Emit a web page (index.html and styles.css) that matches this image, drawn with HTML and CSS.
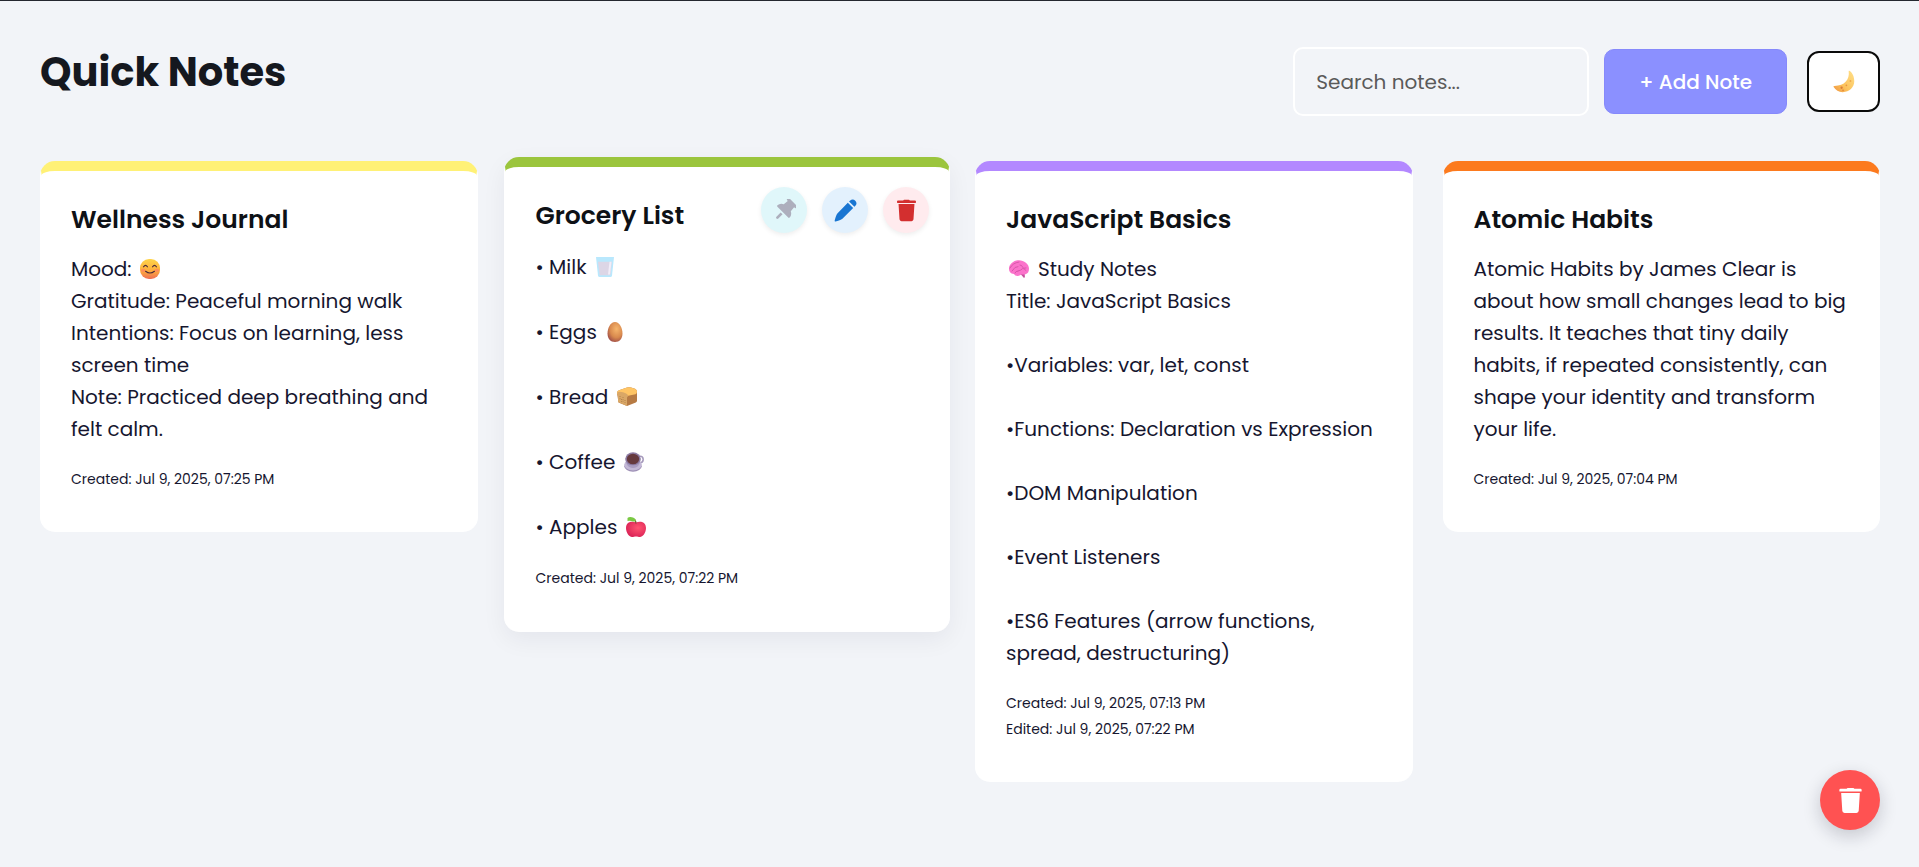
FILE: index.html
```html
<!DOCTYPE html>
<html lang="en">
<head>
<meta charset="utf-8">
<meta name="viewport" content="width=device-width, initial-scale=1">
<title>Quick Notes</title>
<link rel="stylesheet" href="styles.css">
</head>
<body>
<svg class="sprite" aria-hidden="true">
  <defs>
    <symbol id="trash" viewBox="0 0 24 24">
      <path d="M8.6 1.6Q8.8.9 9.6.9h4.8q.8 0 1 .7h5.4q1.100 0 1.100 1.100v.8q0 .6-.6.6H2.700q-.6 0-.6-.6v-.8q0-1.100 1.100-1.100z"/>
      <path d="M3.700 5.300h16.600l-1 15.900q-.1 1.900-2 1.900H6.700q-1.900 0-2-1.900z"/>
    </symbol>
    <linearGradient id="gold" x1="0" y1="0" x2="0" y2="1"><stop offset="0" stop-color="#ffd54a"/><stop offset=".6" stop-color="#fdac3c"/><stop offset="1" stop-color="#ee6e55"/></linearGradient>
    <linearGradient id="moonlit" x1="1" y1="0" x2="0" y2="1"><stop offset="0" stop-color="#ffe08a"/><stop offset=".6" stop-color="#fcc35c"/><stop offset="1" stop-color="#ef9440"/></linearGradient>
    <radialGradient id="shell" cx=".6" cy=".35" r=".7"><stop offset="0" stop-color="#f6b56c"/><stop offset=".6" stop-color="#d98a4e"/><stop offset="1" stop-color="#a04e48"/></radialGradient>
    <radialGradient id="ruby" cx=".6" cy=".4" r=".7"><stop offset="0" stop-color="#ff5470"/><stop offset="1" stop-color="#d81f55"/></radialGradient>
  </defs>
</svg>

<header class="topbar">
  <h1 class="brand">Quick Notes</h1>
  <div class="controls">
    <input class="search" type="search" aria-label="Search notes" placeholder="Search notes...">
    <button class="add" type="button">+ Add Note</button>
    <button class="theme" type="button" aria-label="Toggle dark mode">
      <svg class="moon" viewBox="0 0 24 24"><path d="M17.600.9q-.9-.4-.7.6C18 9.700 12.800 16.400 2 16.600q-1.500 0-.8 1.200c1.900 3.200 5.400 5.300 9.500 5.300 6.800 0 12-5.100 12-11.300 0-4.800-1.800-9-5.100-10.900z" fill="url(#moonlit)"/><circle cx="9.500" cy="18.500" r="1.200" fill="#d97c35"/><circle cx="14.500" cy="16" r=".9" fill="#e89443"/><circle cx="18.700" cy="11.500" r="1" fill="#efaa4e"/><circle cx="11" cy="21.200" r=".8" fill="#d97c35"/></svg>
    </button>
  </div>
</header>

<main class="notes">
  <article class="note yellow">
    <h2 class="title">Wellness Journal</h2>
    <p class="text">Mood: <svg class="emoji" role="img" aria-label="smiling face" viewBox="0 0 20 20"><rect width="20" height="20" rx="9" fill="url(#gold)"/><ellipse cx="3.200" cy="11.300" rx="2.200" ry="1.600" fill="#ff7f66" opacity=".7"/><ellipse cx="16.800" cy="11.300" rx="2.200" ry="1.600" fill="#ff7f66" opacity=".7"/><path d="M3.600 7.800q1.900-3 3.800 0M12.600 7.800q1.900-3 3.800 0M5.600 12.300q4.400 3.400 8.800 0" fill="none" stroke="#4b2a3a" stroke-width="1.200" stroke-linecap="round"/></svg><br>Gratitude: Peaceful morning walk<br>Intentions: Focus on learning, less screen time<br>Note: Practiced deep breathing and felt calm.</p>
    <footer class="dates"><time>Created: Jul 9, 2025, 07:25 PM</time></footer>
  </article>

  <article class="note green raised">
    <h2 class="title">Grocery List</h2>
    <div class="actions">
      <button class="action pin" type="button" aria-label="Pin note"><svg viewBox="0 0 24 24"><g transform="rotate(45 12 12)"><path d="M6.500-.6h11q1.100 0 1.100 1.100v1q0 1-1.100 1h-.8l.5 5.400q3.800 2 3.800 5.500 0 1.100-1 1.100H4q-1 0-1-1.100 0-3.500 3.800-5.500l.5-5.400h-.8q-1.100 0-1.100-1v-1q0-1.100 1.100-1.100z"/><path d="M10.600 16.300h2.800v6.200q0 1.400-1.400 1.400t-1.400-1.400z"/></g></svg></button>
      <button class="action edit" type="button" aria-label="Edit note"><svg viewBox="0 0 24 24"><path d="M16.600 1.900q3-2.700 5.600 0t-.1 5.500l-.8.800-5.600-5.500z"/><path d="M14.400 4l5.600 5.500L8.800 20.700Q7.700 21.800 1.700 23.500q-1.300.3-1-1Q2.200 16.300 3.500 15z"/></svg></button>
      <button class="action delete" type="button" aria-label="Delete note"><svg viewBox="0 0 24 24"><use href="#trash"/></svg></button>
    </div>
    <ul class="list">
      <li>• Milk <svg class="emoji" role="img" aria-label="glass of milk" viewBox="0 0 20 20"><path d="M1 0h18l-2 18.500q-.2 1.500-1.600 1.500H4.600Q3.200 20 3 18.500z" fill="#b9e8fd"/><path d="M3 4.700h14l-1.500 12.600q-.1.900-.9.900H5.400q-.8 0-.9-.9z" fill="#dcd6e6"/><path d="M14.500 4.700h2L15 17.500h-2z" fill="#f1edf8"/></svg></li>
      <li>• Eggs <svg class="emoji" role="img" aria-label="egg" viewBox="0 0 20 20"><path d="M10 0c4.500 0 7.500 6.300 7.500 11.500 0 5.200-3 8.500-7.500 8.500s-7.500-3.300-7.500-8.500C2.500 6.300 5.500 0 10 0z" fill="url(#shell)"/></svg></li>
      <li>• Bread <svg class="emoji" role="img" aria-label="bread" viewBox="0 0 20 20"><path d="M0 6Q0 4 2 3.300L10 .5q2-.6 4 0l4 1.200q2 .8 2 3v9q0 1.200-1.200 1.700L10 19 1.500 15.500z" fill="#b77b44"/><path d="M0 6Q0 4 2 3.300L10 .5q2-.6 4 0l4 1.200q2 .8 2 3 0 1.800-1.500 2.500L10 9 .8 7.500Q0 7 0 6z" fill="#ffc565"/><path d="M.2 5.500Q2 4 6 5.200q4.500 1.200 5 3.300 0 1.500-1 2V19l-8-3.500q-1-.5-1-1.500V8.500Q0 7 .2 5.500z" fill="#d9a766"/><path d="M3 9v4M6 10v5M8 13v3M4.500 12v3" stroke="#a87849" stroke-width=".8" stroke-dasharray="1 1.200"/></svg></li>
      <li>• Coffee <svg class="emoji" role="img" aria-label="coffee" viewBox="0 0 20 20"><circle cx="16" cy="7.500" r="3.200" fill="none" stroke="#a69abc" stroke-width="1.500"/><ellipse cx="9" cy="14.200" rx="8.700" ry="5.500" fill="#9d8fb5"/><ellipse cx="9" cy="12.800" rx="8.700" ry="5.600" fill="#c3b8d6"/><path d="M1.500 6.500h15c0 5.500-2.500 9.500-7.500 9.500S1.500 12 1.500 6.500z" fill="#a99cc1"/><ellipse cx="9" cy="6.800" rx="7.700" ry="6.500" fill="#8d7ba3"/><ellipse cx="9" cy="7" rx="6.200" ry="5.200" fill="#66393e"/></svg></li>
      <li>• Apples <svg class="emoji" role="img" aria-label="apple" viewBox="0 0 20 20"><path d="M10 5.600C13 4 20 4 20 11c0 5-3.500 9-6 9-1.500 0-2.500-.5-4-.5s-2.500.5-4 .5c-2.500 0-6-4-6-9 0-7 7-7 10-5.400z" fill="url(#ruby)"/><path d="M10 6.500Q10 4 8.500 2.500" stroke="#7a3e2c" stroke-width="1.200" fill="none"/><path d="M1.500 1Q3-.4 6 .2q3.500.6 4 3.800Q8 5.200 5.300 4 3.500 3.300 1.500 4z" fill="#7ac943"/></svg></li>
    </ul>
    <footer class="dates"><time>Created: Jul 9, 2025, 07:22 PM</time></footer>
  </article>

  <article class="note purple">
    <h2 class="title">JavaScript Basics</h2>
    <p class="text"><svg class="emoji lead" role="img" aria-label="brain" viewBox="0 0 20 20"><path d="M11.500 15l3.500 4q1.400-1 .7-4z" fill="#c44f9c"/><path d="M10 1.200c5 0 10 3.800 10 8.300 0 3.300-1.200 5.200-3.500 5.800-2 .6-3.500-.3-5 .7-2.500 1.600-5.500 1-6.500-1C1.500 15 0 12.500 0 9.800c0-5 5-8.600 10-8.600z" fill="#fb73cb"/><path d="M1 9Q3.500 4 10 3M3 12q3-5 6-4.500M11 6q2 0 2.500 2T17 9M9 12q3-.5 4-2t4 1.500M6 14q.5-2 3-2" stroke="#d455a6" stroke-width=".9" stroke-linecap="round" fill="none"/></svg>Study Notes<br>Title: JavaScript Basics</p>
    <ul class="list">
      <li>•Variables: var, let, const</li>
      <li>•Functions: Declaration vs Expression</li>
      <li>•DOM Manipulation</li>
      <li>•Event Listeners</li>
      <li>•ES6 Features (arrow functions, spread, destructuring)</li>
    </ul>
    <footer class="dates"><time>Created: Jul 9, 2025, 07:13 PM</time><time>Edited: Jul 9, 2025, 07:22 PM</time></footer>
  </article>

  <article class="note orange">
    <h2 class="title">Atomic Habits</h2>
    <p class="text">Atomic Habits by James Clear is about how small changes lead to big results. It teaches that tiny daily habits, if repeated consistently, can shape your identity and transform your life.</p>
    <footer class="dates"><time>Created: Jul 9, 2025, 07:04 PM</time></footer>
  </article>
</main>

<button class="fab" type="button" aria-label="Trash"><svg viewBox="0 0 24 24"><use href="#trash"/></svg></button>
</body>
</html>
```
FILE: styles.css
```css
* { box-sizing: border-box; }

body {
  margin: 0;
  min-height: 100vh;
  padding: 46px 39px 40px 40px;
  border-top: 1px solid #24272f;
  background: #f2f4f8;
  color: #16162f;
  font-family: Poppins, Inter, "Open Sans", sans-serif;
  font-size: 20px;
  font-weight: 400;
  line-height: 32px;
}

button, input { font: inherit; }
button { cursor: pointer; }
.sprite { position: absolute; width: 0; height: 0; }

.topbar {
  display: flex;
  justify-content: space-between;
  align-items: center;
  margin-bottom: 45px;
}
.brand {
  margin: 0 0 20px;
  color: #15181f;
  font-size: 40px;
  font-weight: 700;
  line-height: 48px;
}
.controls { display: flex; align-items: center; gap: 15px; }
.search {
  width: 296px;
  height: 69px;
  padding: 0 21px;
  border: 2px solid #fff;
  border-radius: 10px;
  background: transparent;
  color: #16162f;
}
.search::placeholder { color: #5a5a5a; opacity: 1; }
.add {
  height: 65px;
  padding: 0 34px;
  border: 1px solid #8689fb;
  border-radius: 10px;
  background: #8b90ff;
  color: #fff;
  font-weight: 500;
}
.theme {
  display: grid;
  place-items: center;
  width: 73px;
  height: 61px;
  margin-left: 5px;
  padding: 0;
  border: 2px solid #0a0a0a;
  border-radius: 12px;
  background: #fff;
}
.moon { width: 24px; height: 23px; }

.notes {
  display: grid;
  grid-template-columns: repeat(4, minmax(0, 1fr));
  align-items: start;
  gap: 30px;
}
.note {
  position: relative;
  padding: 31px 30px 40px;
  border: 1px solid #fff;
  border-top: 10px solid;
  border-bottom: 0;
  border-radius: 15px;
  background: #fff;
}
.yellow { border-top-color: #fff176; }
.green { border-top-color: #9bc53d; }
.purple { border-top-color: #b388ff; }
.orange { border-top-color: #fc7a1e; }

.title {
  margin: 0 0 15px;
  color: #0e1116;
  font-size: 25px;
  font-weight: 600;
  line-height: 36px;
}
.text { margin: 0; }
.list {
  display: grid;
  gap: 32px;
  margin: 0;
  padding: 0;
  list-style: none;
}
.text + .list { margin-top: 32px; }
.dates {
  display: grid;
  margin-top: 21px;
  font-size: 14px;
  line-height: 26px;
}
.emoji {
  width: 20px;
  height: 20px;
  margin: 0 3px;
  vertical-align: -3px;
}
.lead { margin-right: 9px; }

/* Hovered card grows slightly past its grid cell. */
.raised {
  margin: -4px -5px -4px -4px;
  padding: 31px 31px 41px;
  box-shadow: 0 8px 24px rgba(20, 20, 50, .06);
}
.raised .title { margin-bottom: 17px; }
.raised .list { line-height: 33px; }

.actions {
  position: absolute;
  top: 20px;
  right: 20px;
  display: flex;
  gap: 15px;
}
.action {
  display: grid;
  place-items: center;
  width: 46px;
  height: 46px;
  padding: 0;
  border: 0;
  border-radius: 50%;
  box-shadow: 0 2px 5px rgba(0, 0, 0, .07);
}
.action svg { width: 23px; height: 23px; fill: currentColor; }
.pin { background: #e0f7fa; color: #adafbd; }
.edit { background: #e3f1fd; color: #1976d2; }
.delete { background: #ffebee; color: #d32f2f; }

.fab {
  position: fixed;
  right: 39px;
  bottom: 37px;
  display: grid;
  place-items: center;
  width: 60px;
  height: 60px;
  padding: 0;
  border: 0;
  border-radius: 50%;
  background: #ff5252;
  color: #fff;
  box-shadow: 0 6px 18px rgba(20, 20, 40, .2);
}
.fab svg { width: 27px; height: 27px; fill: currentColor; }
```
